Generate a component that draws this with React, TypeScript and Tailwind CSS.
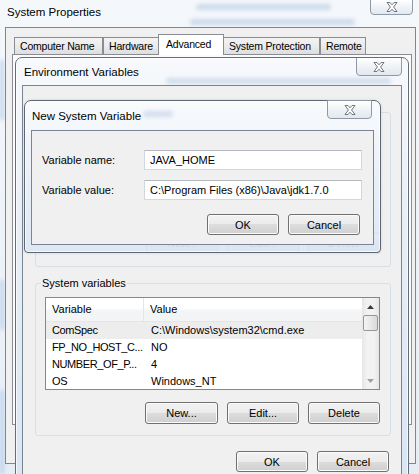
// App.tsx - Windows 7 "New System Variable" dialog stack

const btn =
  "flex h-[21px] items-center justify-center rounded-[3px] border border-[#707070] bg-[linear-gradient(#f2f2f2,#ebebeb_50%,#dddddd_50%,#cfcfcf)] shadow-[inset_0_0_0_1px_#fbfbfb] text-[11px] text-black";

function CloseGlyph() {
  return (
    <svg width="12" height="10" viewBox="0 0 12 10">
      <polygon
        points="1,0.5 4,0.5 6,2.8 8,0.5 11,0.5 7.6,5 11,9.5 8,9.5 6,7.2 4,9.5 1,9.5 4.4,5"
        fill="#fdfdfd"
        stroke="#6f7680"
        strokeWidth="1"
        strokeLinejoin="round"
      />
    </svg>
  );
}

function CloseButton({ className }: { className: string }) {
  return (
    <div
      className={
        "absolute flex items-center justify-center rounded-b-[4px] border border-[#8e99a6] bg-[linear-gradient(#ffffff,#eef2f6_55%,#e2e8ef)] " +
        className
      }
    >
      <CloseGlyph />
    </div>
  );
}

const rows = [
  { name: "ComSpec", value: "C:\\Windows\\system32\\cmd.exe", sel: true },
  { name: "FP_NO_HOST_C...", value: "NO", sel: false },
  { name: "NUMBER_OF_P...", value: "4", sel: false },
  { name: "OS", value: "Windows_NT", sel: false },
];

function ListView() {
  return (
    <div className="flex h-[93px] w-[335px] border border-[#828790] bg-white">
      <div className="flex flex-1 flex-col">
        <div className="flex h-[24px] border-b border-[#e5e5e5] bg-[linear-gradient(#ffffff,#ffffff_45%,#f4f5f7_55%,#f3f4f6)]">
          <div className="flex w-[98px] items-center border-r border-[#e5e5e5] pl-[6px]">Variable</div>
          <div className="flex flex-1 items-center pl-[6px]">Value</div>
        </div>
        {rows.map((r) => (
          <div key={r.name} className={"flex h-[17px] items-center " + (r.sel ? "bg-[#ededed]" : "")}>
            <div className="w-[99px] overflow-hidden whitespace-nowrap pl-[6px] tracking-[-0.4px]">{r.name}</div>
            <div className="whitespace-nowrap pl-[6px]">{r.value}</div>
          </div>
        ))}
      </div>
      {/* scrollbar */}
      <div className="flex w-[17px] flex-col bg-[linear-gradient(90deg,#e6e6e6,#f2f2f2_30%,#f2f2f2_70%,#e6e6e6)]">
        <div className="flex h-[17px] items-center justify-center">
          <svg width="7" height="4" viewBox="0 0 7 4">
            <polygon points="0,4 3.5,0 7,4" fill="#3c3c3c" />
          </svg>
        </div>
        <div className="mx-px h-[16px] rounded-[2px] border border-[#979797] bg-[linear-gradient(90deg,#f4f4f4,#e8e8e8_50%,#d8d8d8)]" />
        <div className="flex-1" />
        <div className="flex h-[17px] items-center justify-center">
          <svg width="7" height="4" viewBox="0 0 7 4">
            <polygon points="0,0 7,0 3.5,4" fill="#a0a0a0" />
          </svg>
        </div>
      </div>
    </div>
  );
}

function Tab({ label, w, selected }: { label: string; w: string; selected?: boolean }) {
  return (
    <div
      className={
        selected
          ? "relative z-10 -mx-px -mb-px flex h-[21px] items-start whitespace-nowrap border border-b-0 border-[#898c95] bg-white pl-[7px] pt-[2px] text-[10.5px] tracking-[-0.2px] " + w
          : "flex h-[17px] items-center whitespace-nowrap border border-b-0 border-[#898c95] bg-[linear-gradient(#f3f3f3,#ebebeb_50%,#dedede)] pl-[5px] text-[10.5px] tracking-[-0.2px] " + w
      }
    >
      {label}
    </div>
  );
}

export default function App() {
  return (
    <div className="relative h-[474px] w-[419px] overflow-hidden bg-[linear-gradient(180deg,#f5f8fb,#e6edf5)] font-['Liberation_Sans',Arial,sans-serif] text-[11px] leading-[14px] text-black">
      {/* desktop seen through the glass */}
      <div className="absolute left-[196px] top-[4px] h-[6px] w-[135px] rounded-full bg-[#8fabd4] opacity-40 blur-[2px]" />
      <div className="absolute left-[190px] top-[19px] h-[6px] w-[165px] rounded-full bg-[#8fabd4] opacity-40 blur-[2px]" />
      <div className="absolute left-0 top-[60px] h-[60px] w-[4px] bg-[#9fbde3] opacity-60 blur-[2px]" />
      <div className="absolute left-0 top-[280px] h-[50px] w-[4px] bg-[#9fbde3] opacity-60 blur-[2px]" />
      <div className="absolute left-0 top-[390px] h-[84px] w-[4px] bg-[#a9c6ea] opacity-70 blur-[2px]" />

      {/* System Properties */}
      <div className="absolute left-[7px] top-[5px] text-[11.5px]">System Properties</div>
      <CloseButton className="left-[370px] top-[-1px] h-[16px] w-[43px]" />
      <div className="absolute left-[5px] top-[27px] h-[437px] w-[411px] border border-[#7d8794] bg-[#f0f0f0] pl-[6px] pt-[6px]">
        <div className="flex h-[20px] items-end pl-[2px]">
          <Tab label="Computer Name" w="w-[89px]" />
          <Tab label="Hardware" w="w-[56px]" />
          <Tab label="Advanced" w="w-[66px]" selected />
          <Tab label="System Protection" w="w-[97px]" />
          <Tab label="Remote" w="w-[46px]" />
        </div>
        <div className="h-[371px] w-[400px] border border-[#898c95] bg-[#fbfbfb]" />
      </div>

      {/* Environment Variables */}
      <div className="absolute left-[15px] top-[57px] h-[440px] w-[394px] rounded-t-[7px] border border-[#646e7a] bg-[linear-gradient(180deg,#f7f9fc,#e7eef6_40%,#d9e5f2)] shadow-[inset_0_0_0_1px_rgba(255,255,255,0.7)]">
        <div className="relative flex h-[27px] items-center overflow-hidden pl-[8px] text-[11.5px]">
          <div className="absolute left-[150px] top-[20px] h-[6px] w-[225px] rounded-full bg-[#9ab4d8] opacity-40 blur-[2px]" />
          <span className="relative">Environment Variables</span>
          <CloseButton className="right-[6px] top-[-1px] h-[19px] w-[46px]" />
        </div>
        <div className="mx-[6px] h-[400px] border border-[#7a8591] bg-[#f0f0f0]">
          {/* User variables (mostly hidden) */}
          <div className="ml-[12px] mt-[26px] flex h-[155px] w-[356px] flex-col items-end justify-end rounded-[3px] border border-[#d5dfe5] pb-[13px] pr-[10px]">
            <div className="flex gap-[9px]">
              <div className={btn + " w-[72px]"}>New...</div>
              <div className={btn + " w-[72px]"}>Edit...</div>
              <div className={btn + " w-[72px]"}>Delete</div>
            </div>
          </div>
          {/* System variables */}
          <div className="relative ml-[12px] mt-[16px] h-[153px] w-[356px] rounded-[3px] border border-[#d5dfe5] pl-[9px] pt-[13px]">
            <div className="absolute -top-[8px] left-[5px] bg-[#f0f0f0] px-[1px]">System variables</div>
            <ListView />
            <div className="mt-[12px] flex justify-end gap-[9px] pr-[10px]">
              <div className={btn + " h-[22px] w-[73px]"}>New...</div>
              <div className={btn + " h-[22px] w-[72px]"}>Edit...</div>
              <div className={btn + " h-[22px] w-[72px]"}>Delete</div>
            </div>
          </div>
          <div className="mt-[15px] flex justify-end gap-[9px] pr-[12px]">
            <div className={btn + " w-[72px]"}>OK</div>
            <div className={btn + " w-[72px]"}>Cancel</div>
          </div>
        </div>
      </div>

      {/* New System Variable */}
      <div className="absolute left-[24px] top-[100px] h-[153px] w-[357px] rounded-t-[7px] rounded-b-[4px] border border-[#5c6773] bg-[linear-gradient(180deg,rgba(249,251,253,0.97),rgba(234,240,248,0.94)_50%,rgba(220,231,244,0.92))] shadow-[0_0_3px_rgba(0,0,0,0.12),inset_0_0_0_1px_rgba(255,255,255,0.7)]">
        <div className="relative flex h-[29px] items-center pl-[7px] text-[11.5px]">
          <div className="absolute left-[118px] top-[10px] h-[6px] w-[30px] rounded-full bg-[#9db5d6] opacity-40 blur-[2px]" />
          <span className="relative">New System Variable</span>
          <CloseButton className="right-[8px] top-[-1px] h-[19px] w-[45px]" />
        </div>
        <div className="mx-[6px] h-[115px] border border-[#7a8591] bg-[#f0f0f0] pt-[19px]">
          <div className="flex items-center">
            <div className="w-[112px] pl-[10px]">Variable name:</div>
            <div className="flex h-[20px] w-[218px] items-center border border-[#d3d7dc] border-t-[#b5bac0] bg-white pl-[5px]">
              JAVA_HOME
            </div>
          </div>
          <div className="mt-[10px] flex items-center">
            <div className="w-[112px] pl-[10px]">Variable value:</div>
            <div className="flex h-[20px] w-[218px] items-center border border-[#d3d7dc] border-t-[#b5bac0] bg-white pl-[5px]">
              C:\Program Files (x86)\Java\jdk1.7.0
            </div>
          </div>
          <div className="mt-[14px] flex justify-end gap-[9px] pr-[13px]">
            <div className={btn + " w-[72px]"}>OK</div>
            <div className={btn + " w-[72px]"}>Cancel</div>
          </div>
        </div>
      </div>
    </div>
  );
}
